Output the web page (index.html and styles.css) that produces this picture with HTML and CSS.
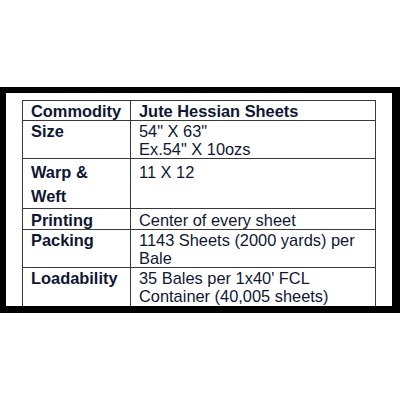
FILE: index.html
```html
<!DOCTYPE html>
<html>
<head>
<meta charset="utf-8">
<link rel="stylesheet" href="styles.css">
</head>
<body>
<div class="frame">
  <table class="spec">
    <colgroup><col class="c1"><col class="c2"></colgroup>
    <tr><td class="k">Commodity</td><td class="k">Jute Hessian Sheets</td></tr>
    <tr><td class="k">Size</td><td>54" X 63"<br>Ex.54" X 10ozs</td></tr>
    <tr class="tall"><td class="k">Warp &amp;<br>Weft</td><td>11 X 12</td></tr>
    <tr class="p2"><td class="k">Printing</td><td>Center of every sheet</td></tr>
    <tr><td class="k">Packing</td><td>1143 Sheets (2000 yards) per Bale</td></tr>
    <tr class="last"><td class="k">Loadability</td><td>35 Bales per 1x40' FCL Container (40,005 sheets)</td></tr>
  </table>
</div>
</body>
</html>
```
FILE: styles.css
```css
html, body {
  margin: 0;
  background: #ffffff;
}
body {
  padding-top: 87px;
  font-family: "Liberation Sans", Arial, sans-serif;
}
.frame {
  width: 370px;
  height: 206px;
  border-style: solid;
  border-color: #000;
  border-width: 6px 8px 7px 6px;
  background: #fff;
  overflow: hidden;
  padding: 7px 0 0 16px;
  box-sizing: content-box;
}
.spec {
  border-collapse: collapse;
  width: 354px;
  table-layout: fixed;
  color: #0f1733;
  font-size: 16.4px;
  line-height: 18px;
}
.c1 { width: 108px; }
.spec td {
  border: 1px solid #3a3a3a;
  padding: 1px 6px 0 8px;
  vertical-align: top;
}
.k {
  font-weight: bold;
}
.tall td {
  line-height: 24px;
}
.p2 td {
  padding-top: 2px;
}
.last td {
  padding-bottom: 10px;
}
```
